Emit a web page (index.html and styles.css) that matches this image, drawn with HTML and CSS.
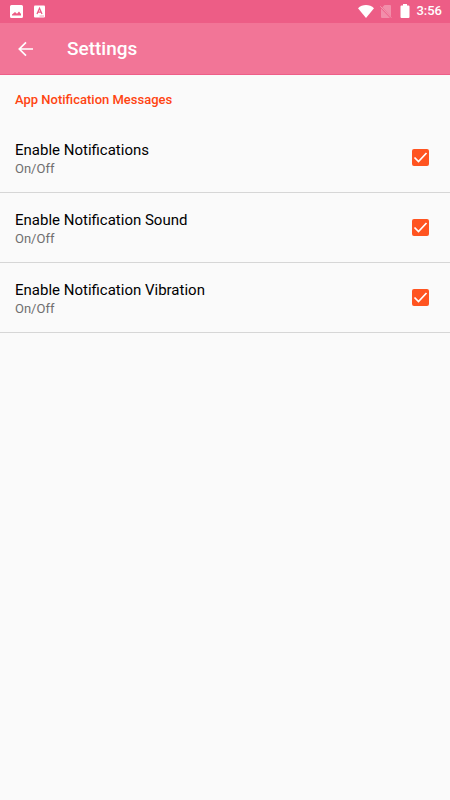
FILE: index.html
```html
<!DOCTYPE html>
<html lang="en">
<head>
<meta charset="utf-8">
<meta name="viewport" content="width=device-width, initial-scale=1">
<title>Settings</title>
<link rel="stylesheet" href="styles.css">
</head>
<body>
<div class="status-bar">
  <div class="status-group status-notices">
    <svg width="13" height="13" viewBox="0 0 13 13" aria-hidden="true"><path fill="#fff" fill-rule="evenodd" d="M1.500 0h10a1.500 1.500 0 0 1 1.500 1.500v10a1.500 1.500 0 0 1-1.500 1.500h-10A1.500 1.500 0 0 1 0 11.500v-10A1.500 1.500 0 0 1 1.500 0zM2 10.500h9V9L9 6.500l-2 2.200-2-1.700-3 2.500z"/></svg>
    <svg width="11" height="13" viewBox="0 0 11 13" aria-hidden="true"><rect y=".5" width="11" height="12" rx="1" fill="#fff"/><path d="M3 9 5.500 3.300 8 9M3.900 7.200h3.200" fill="none" stroke="#ed5d86" stroke-width="1.300"/><path d="M5.500 11H10" stroke="#f4a0b8" stroke-width="1"/></svg>
  </div>
  <div class="status-group status-system">
    <svg width="16" height="13" viewBox="0 0 16 13" aria-hidden="true"><path fill="#fff" d="M8 13 0 3.200C2.200 1.100 5 0 8 0s5.800 1.100 8 3.200z"/></svg>
    <svg width="14" height="13" viewBox="0 0 14 13" aria-hidden="true"><path fill="#fff" fill-opacity=".3" d="M4.500 0H10a1 1 0 0 1 1 1v10.500L2.300 2.300zM1 3.500V12a1 1 0 0 0 1 1h8z"/><path d="M.3 1.300 11.300 12.700" stroke="#f59ab3"/></svg>
    <svg width="10" height="14" viewBox="0 0 10 14" aria-hidden="true"><path fill="#fff" d="M3 0h4v1.500h1.500a1 1 0 0 1 1 1V13a1 1 0 0 1-1 1h-7a1 1 0 0 1-1-1V2.500a1 1 0 0 1 1-1H3z"/></svg>
    <time class="clock">3:56</time>
  </div>
</div>
<header class="app-bar">
  <button class="back" type="button" aria-label="Back">
    <svg width="16" height="16" viewBox="0 0 16 16" aria-hidden="true"><path d="M15 8H1.500M8 1.300 1.300 8 8 14.700" fill="none" stroke="#fff" stroke-width="1.700"/></svg>
  </button>
  <h1 class="title">Settings</h1>
</header>
<main>
  <h2 class="section-title">App Notification Messages</h2>
  <label class="setting">
    <span class="setting-text"><span class="setting-name">Enable Notifications</span><span class="setting-note">On/Off</span></span>
    <span class="tick"><input type="checkbox" checked><svg viewBox="0 0 17 17" aria-hidden="true"><path d="m2.500 8.500 4 4 8-8.500"/></svg></span>
  </label>
  <label class="setting">
    <span class="setting-text"><span class="setting-name">Enable Notification Sound</span><span class="setting-note">On/Off</span></span>
    <span class="tick"><input type="checkbox" checked><svg viewBox="0 0 17 17" aria-hidden="true"><path d="m2.500 8.500 4 4 8-8.500"/></svg></span>
  </label>
  <label class="setting">
    <span class="setting-text"><span class="setting-name">Enable Notification Vibration</span><span class="setting-note">On/Off</span></span>
    <span class="tick"><input type="checkbox" checked><svg viewBox="0 0 17 17" aria-hidden="true"><path d="m2.500 8.500 4 4 8-8.500"/></svg></span>
  </label>
</main>
</body>
</html>
```
FILE: styles.css
```css
* { box-sizing: border-box; }

body {
  margin: 0;
  background: #fafafa;
  color: #000;
  font-family: Roboto, "Liberation Sans", sans-serif;
}

svg { display: block; }

.status-bar {
  display: flex;
  justify-content: space-between;
  align-items: center;
  height: 23px;
  padding: 0 8px 1px 10px;
  background: #ed5d86;
}

.status-group { display: flex; align-items: center; }
.status-notices { gap: 11px; }
.status-system { gap: 6px; }

.clock {
  color: #fff;
  font-size: 13px;
  font-weight: 500;
  line-height: 22px;
}

.app-bar {
  display: flex;
  align-items: center;
  height: 52px;
  background: #f27597;
  border-bottom: 1px solid #ee5e88;
}

.back {
  display: flex;
  padding: 16px 18px;
  border: 0;
  background: none;
}

.title {
  margin: 0 0 0 15px;
  color: #fff;
  font-size: 19px;
  font-weight: 500;
  line-height: 26px;
}

.section-title {
  margin: 0;
  padding: 17px 15px 15px;
  color: #ff4411;
  font-size: 13px;
  font-weight: 500;
  line-height: 16px;
}

.setting {
  display: flex;
  justify-content: space-between;
  align-items: center;
  height: 70px;
  padding: 0 21px 0 15px;
  border-bottom: 1px solid #d6d6d6;
}

.setting-text {
  display: flex;
  flex-direction: column;
  padding-top: 2px;
}

.setting-name { font-size: 15px; line-height: 20px; }

.setting-note {
  color: #6f6f6f;
  font-size: 13px;
  line-height: 18px;
}

.tick { position: relative; width: 17px; height: 17px; }

.tick input {
  display: block;
  appearance: none;
  width: 17px;
  height: 17px;
  margin: 0;
  border: 2px solid #757575;
  border-radius: 2px;
}

.tick input:checked { border-color: #ff5420; background: #ff5420; }

.tick svg {
  position: absolute;
  inset: 0;
  fill: none;
  stroke: #fff;
  stroke-width: 1.7;
  pointer-events: none;
}

.tick input:not(:checked) + svg { display: none; }
```
